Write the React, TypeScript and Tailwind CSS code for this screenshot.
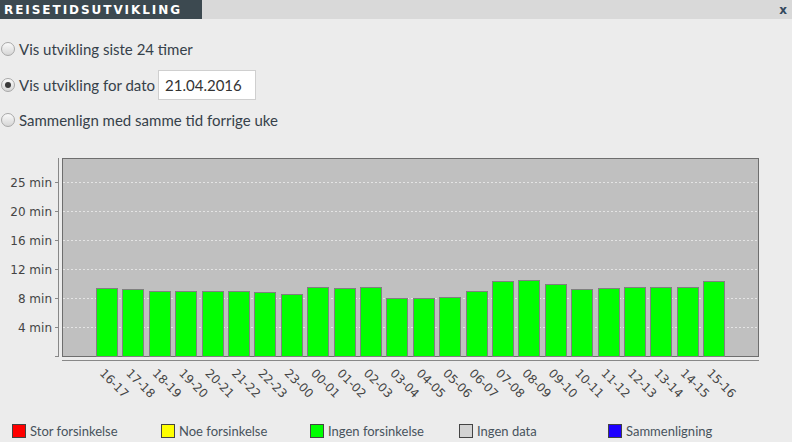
import React from "react";

// Travel time chart, hourly slots from 16-17 to 15-16
const slots = [
  "16-17", "17-18", "18-19", "19-20", "20-21", "21-22", "22-23", "23-00",
  "00-01", "01-02", "02-03", "03-04", "04-05", "05-06", "06-07", "07-08",
  "08-09", "09-10", "10-11", "11-12", "12-13", "13-14", "14-15", "15-16",
];
// bar top, in page pixels
const tops = [
  288, 289, 291, 291, 291, 291, 292, 294, 287, 288, 287, 298,
  298, 297, 291, 281, 280, 284, 289, 288, 287, 287, 287, 281,
];

const OFF = 150; // svg starts at page y=150
const yTicks = [
  { label: "25 min", y: 182 },
  { label: "20 min", y: 211 },
  { label: "16 min", y: 240 },
  { label: "12 min", y: 269 },
  { label: "8 min", y: 298 },
  { label: "4 min", y: 327 },
];

const legend = [
  { color: "bg-[#ff0000]", text: "Stor forsinkelse" },
  { color: "bg-[#ffff00]", text: "Noe forsinkelse" },
  { color: "bg-[#00ff00]", text: "Ingen forsinkelse" },
  { color: "bg-[#d3d3d3]", text: "Ingen data" },
  { color: "bg-[#1e00ff]", text: "Sammenligning" },
];

function Radio({ checked }: { checked?: boolean }) {
  return (
    <div className="w-[14px] h-[14px] ml-[1px] mr-[4px] rounded-full border border-[#a8a8a8] bg-gradient-to-b from-[#fafafa] to-[#d6d6d6] flex items-center justify-center shrink-0">
      {checked && <div className="w-[6px] h-[6px] rounded-full bg-[#3a3a3a]" />}
    </div>
  );
}

function Chart() {
  const x0 = 96;
  const pitch = 26.4;
  const bw = 21;
  return (
    <svg width="792" height="260" className="block" style={{ fontFamily: "'DejaVu Sans', sans-serif" }}>
      {/* plot background */}
      <rect x={62.5} y={158.5 - OFF} width={696} height={198} fill="#c0c0c0" stroke="#6e6e6e" />
      {/* grid lines */}
      {yTicks.map((t) => (
        <line key={t.label} x1={63} x2={758} y1={t.y + 0.5 - OFF} y2={t.y + 0.5 - OFF} stroke="#e4e4e4" strokeDasharray="2 2" />
      ))}
      {/* y axis */}
      <line x1={58.5} x2={58.5} y1={158 - OFF} y2={357 - OFF} stroke="#888" />
      {yTicks.map((t) => (
        <g key={"t" + t.label}>
          <line x1={55} x2={58} y1={t.y + 0.5 - OFF} y2={t.y + 0.5 - OFF} stroke="#888" />
          <text x={52} y={t.y + 4.5 - OFF} textAnchor="end" fontSize="12" fill="#444">
            {t.label}
          </text>
        </g>
      ))}
      <line x1={55} x2={58} y1={356.5 - OFF} y2={356.5 - OFF} stroke="#888" />
      {/* x axis */}
      <line x1={62} x2={759} y1={360.5 - OFF} y2={360.5 - OFF} stroke="#888" />
      {/* bars */}
      {tops.map((top, i) => {
        const x = Math.round(x0 + i * pitch);
        return (
          <rect key={i} x={x + 0.5} y={top + 0.5 - OFF} width={bw} height={356 - top} fill="#00ff00" stroke="#808080" />
        );
      })}
      {/* slot labels */}
      {slots.map((s, i) => {
        const cx = x0 + i * pitch + bw / 2;
        const tx = cx - 7.5;
        const ty = 374 - OFF;
        return (
          <text key={s} x={tx} y={ty} fontSize="12" fill="#444" transform={`rotate(45 ${tx} ${ty})`}>
            {s}
          </text>
        );
      })}
    </svg>
  );
}

export default function App() {
  return (
    <div className="w-[792px] h-[442px] bg-[#ececec] overflow-hidden" style={{ fontFamily: "Lato, 'Noto Sans', sans-serif" }}>
      {/* title bar */}
      <div className="flex h-[19px] bg-[#d9d9d9]">
        <div className="w-[202px] bg-[#3c4950] flex items-center pl-[4px]">
          <span className="text-white font-bold text-[12px] tracking-[1.95px] leading-none" style={{ fontFamily: "'DejaVu Sans', sans-serif" }}>
            REISETIDSUTVIKLING
          </span>
        </div>
        <div className="flex-1 flex items-center justify-end pr-[5px]">
          <span className="text-[12px] font-bold text-[#34495e] leading-none" style={{ fontFamily: "'DejaVu Sans', sans-serif" }}>x</span>
        </div>
      </div>

      {/* options */}
      <div className="pt-[19px] text-[15px] text-[#36414a]">
        <div className="h-[22px] flex items-center">
          <Radio />
          <span>Vis utvikling siste 24 timer</span>
        </div>
        <div className="mt-[10px] h-[30px] flex items-center">
          <Radio checked />
          <span>Vis utvikling for dato</span>
          <div className="ml-[3px] w-[98px] h-[30px] bg-white border border-[#cfcfcf] flex items-center pl-[6px] text-[#333]">
            21.04.2016
          </div>
        </div>
        <div className="mt-[9px] h-[22px] flex items-center">
          <Radio />
          <span>Sammenlign med samme tid forrige uke</span>
        </div>
      </div>

      {/* chart */}
      <div className="mt-[19px]">
        <Chart />
      </div>

      {/* legend */}
      <div className="flex pt-[14px] pl-[12px]">
        {legend.map((l) => (
          <div key={l.text} className="w-[149px] flex items-center">
            <div className={`w-[14px] h-[14px] border border-[#444] ${l.color} shrink-0`} />
            <span className="ml-[4px] text-[13px] leading-[14px] text-[#48535c]">{l.text}</span>
          </div>
        ))}
      </div>
    </div>
  );
}
